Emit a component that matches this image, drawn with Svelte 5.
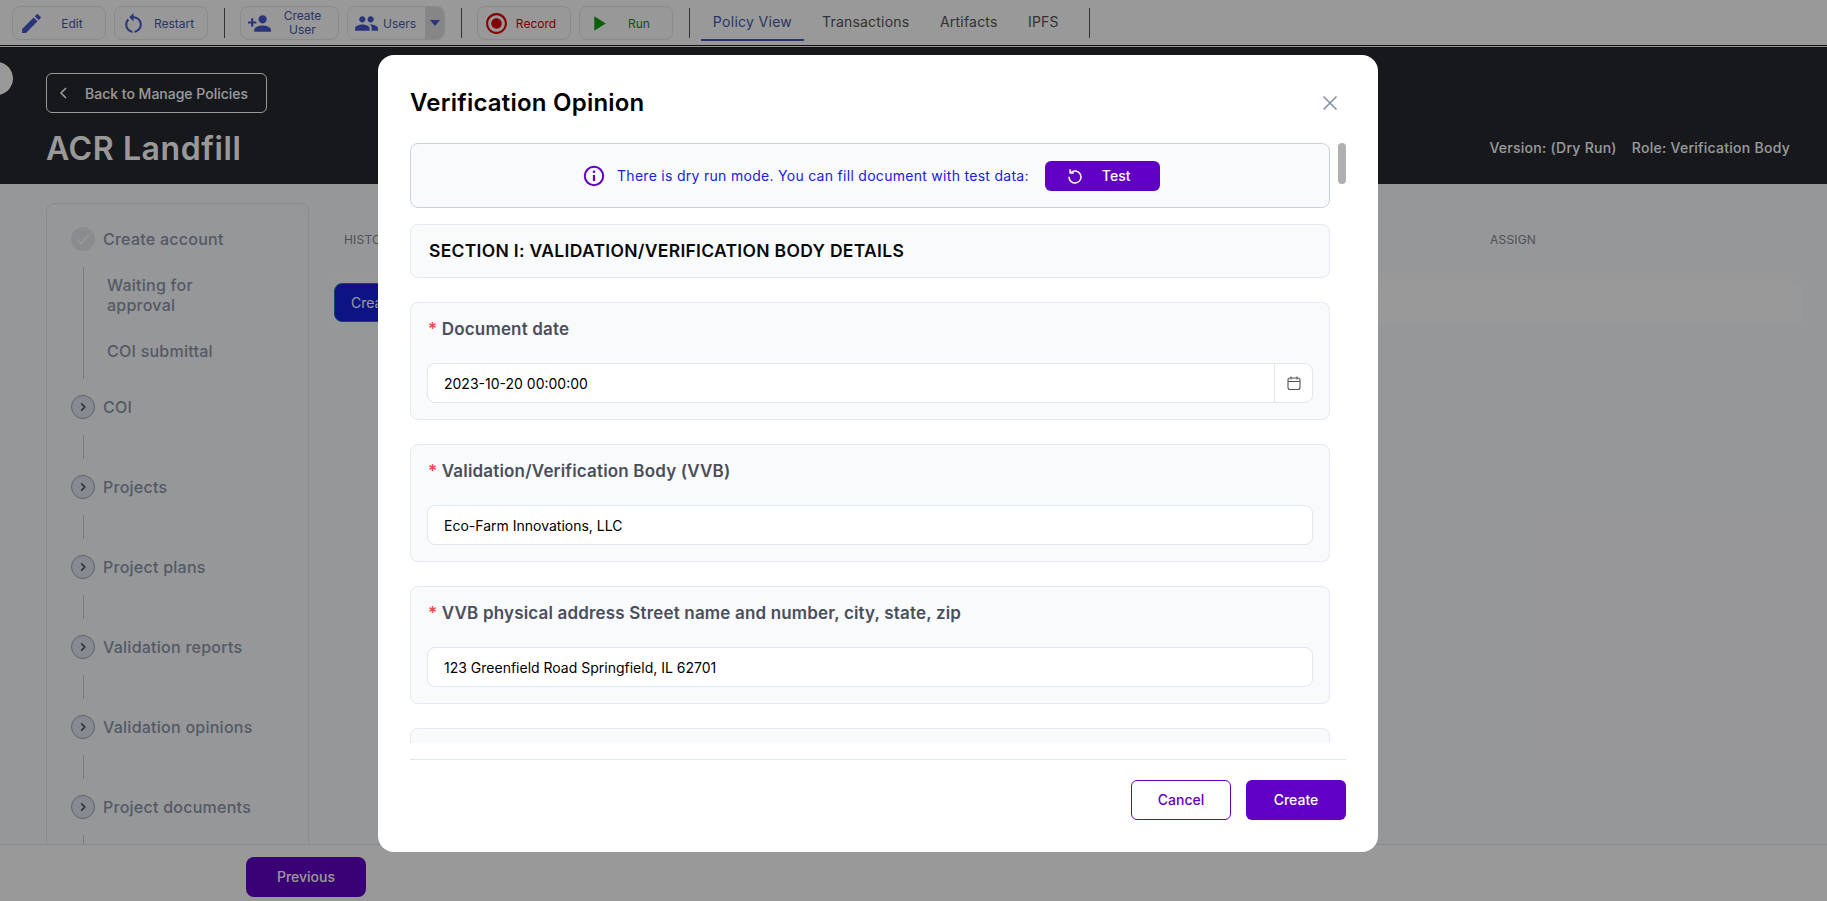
<script>
  const steps = ['COI', 'Projects', 'Project plans', 'Validation reports', 'Validation opinions', 'Project documents'];
  const fields = [
    { label: 'Document date', value: '2023-10-20 00:00:00', date: true },
    { label: 'Validation/Verification Body (VVB)', value: 'Eco-Farm Innovations, LLC' },
    { label: 'VVB physical address Street name and number, city, state, zip', value: '123 Greenfield Road Springfield, IL 62701' }
  ];
</script>

<div class="page">
  <nav class="toolbar">
    <button class="tool"><svg viewBox="0 0 24 24" class="ti blue"><path d="M3 17.25V21h3.75L17.81 9.94l-3.75-3.75L3 17.25zM20.71 7.04c.39-.39.39-1.02 0-1.41l-2.34-2.34c-.39-.39-1.02-.39-1.41 0l-1.83 1.83 3.75 3.75 1.83-1.83z"/></svg><span class="tl blue-t">Edit</span></button>
    <button class="tool"><svg viewBox="0 0 24 24" class="ti blue"><path d="M12 5V2L8 6l4 4V7c3.31 0 6 2.69 6 6 0 2.97-2.17 5.43-5 5.91v2.02c3.95-.49 7-3.85 7-7.93 0-4.42-3.58-8-8-8zm-6 8c0-1.65.67-3.15 1.76-4.24L6.34 7.34C4.9 8.79 4 10.79 4 13c0 4.08 3.05 7.44 7 7.93v-2.02c-2.83-.48-5-2.94-5-5.91z"/></svg><span class="tl blue-t">Restart</span></button>
    <i class="sep"></i>
    <button class="tool wide"><svg viewBox="0 0 24 24" class="ti blue"><path d="M15 12c2.21 0 4-1.79 4-4s-1.79-4-4-4-4 1.79-4 4 1.79 4 4 4zm-9-2V7H4v3H1v2h3v3h2v-3h3v-2H6zm9 4c-2.67 0-8 1.34-8 4v2h16v-2c0-2.66-5.33-4-8-4z"/></svg><span class="tl blue-t two">Create<br />User</span></button>
    <div class="split">
      <button class="tool-main"><svg viewBox="0 0 24 24" class="ti blue"><path d="M16 11c1.66 0 2.99-1.34 2.99-3S17.66 5 16 5c-1.66 0-3 1.34-3 3s1.34 3 3 3zm-8 0c1.66 0 2.99-1.34 2.99-3S9.66 5 8 5C6.34 5 5 6.34 5 8s1.34 3 3 3zm0 2c-2.33 0-7 1.17-7 3.5V19h14v-2.5c0-2.33-4.67-3.5-7-3.5zm8 0c-.29 0-.62.02-.97.05 1.16.84 1.97 1.97 1.97 3.45V19h6v-2.5c0-2.33-4.67-3.5-7-3.5z"/></svg><span class="blue-t users">Users</span></button>
      <button class="drop"><i class="tri"></i></button>
    </div>
    <i class="sep"></i>
    <button class="tool"><svg viewBox="0 0 24 24" class="ti red"><path d="M12 7c-2.76 0-5 2.24-5 5s2.24 5 5 5 5-2.24 5-5-2.24-5-5-5zm0-5C6.48 2 2 6.48 2 12s4.48 10 10 10 10-4.48 10-10S17.52 2 12 2zm0 18c-4.42 0-8-3.58-8-8s3.58-8 8-8 8 3.58 8 8-3.58 8-8 8z"/></svg><span class="tl red-t rec">Record</span></button>
    <button class="tool"><svg viewBox="0 0 24 24" class="ti green"><path d="M8 5v14l11-7z"/></svg><span class="tl green-t">Run</span></button>
    <i class="sep"></i>
    <div class="tabs">
      <span class="tab active">Policy View</span>
      <span class="tab">Transactions</span>
      <span class="tab">Artifacts</span>
      <span class="tab">IPFS</span>
    </div>
    <i class="sep last"></i>
  </nav>

  <header class="head">
    <i class="collapse"></i>
    <div class="head-left">
      <button class="back"><svg viewBox="0 0 16 16" class="chev"><path d="M10 3 5 8l5 5" fill="none" stroke="currentColor" stroke-width="1.6"/></svg>Back to Manage Policies</button>
      <h1>ACR Landfill</h1>
    </div>
    <div class="meta"><span>Version: (Dry Run)</span><span>Role: Verification Body</span></div>
  </header>

  <main class="main">
    <aside class="side">
      <div class="step"><span class="dot done"><svg viewBox="0 0 24 24"><path d="m6 12.5 4 4 8-9" fill="none" stroke="#fff" stroke-width="1.6"/></svg></span><span>Create account</span></div>
      <div class="subs">
        <div>Waiting for<br />approval</div>
        <div>COI submittal</div>
      </div>
      {#each steps as s}
        <div class="step"><span class="dot"><svg viewBox="0 0 24 24"><path d="m10 8 4 4-4 4" fill="none" stroke="#4d5568" stroke-width="1.7"/></svg></span><span>{s}</span></div>
        <i class="vline"></i>
      {/each}
    </aside>
    <section class="content">
      <div class="thead"><span>HISTORY</span><span class="assign">ASSIGN</span></div>
      <div class="strip"></div>
      <div class="trow"><button class="create-old">Create</button></div>
    </section>
  </main>

  <footer class="foot"><button class="prev">Previous</button></footer>

  <div class="overlay">
    <div class="modal">
      <div class="m-head">
        <h2>Verification Opinion</h2>
        <svg viewBox="0 0 16 16" class="close"><path d="M1.5 1.5l13 13M14.5 1.5l-13 13" fill="none" stroke="#848fa9" stroke-width="1.6"/></svg>
      </div>
      <div class="m-body">
        <div class="scroller">
          <div class="alert">
            <svg viewBox="0 0 24 24" class="info"><circle cx="12" cy="12" r="9.2" fill="none" stroke="#6100c4" stroke-width="2"/><path d="M12 11v6" stroke="#6100c4" stroke-width="2.2" fill="none"/><circle cx="12" cy="7.8" r="1.3" fill="#6100c4"/></svg>
            <span>There is dry run mode. You can fill document with test data:</span>
            <button class="test"><svg viewBox="0 0 24 24" class="ri"><path d="M6.5 7.5A8 8 0 1 1 4 13" fill="none" stroke="#fff" stroke-width="2"/><path d="M5.5 3v5h5" fill="none" stroke="#fff" stroke-width="2"/></svg>Test</button>
          </div>
          <div class="section-title">SECTION I: VALIDATION/VERIFICATION BODY DETAILS</div>
          {#each fields as f}
            <div class="field">
              <div class="label"><span class="star">*</span> {f.label}</div>
              <div class="input">
                <span class="val">{f.value}</span>
                {#if f.date}
                  <span class="cal"><svg viewBox="0 0 16 16"><rect x="2" y="3" width="12" height="11.5" rx="2" fill="none" stroke="#555" stroke-width="1.1"/><path d="M2 6.5h12M5 1.5v3M11 1.5v3" stroke="#555" stroke-width="1.1" fill="none"/></svg></span>
                {/if}
              </div>
            </div>
          {/each}
          <div class="field"></div>
        </div>
        <i class="thumb"></i>
      </div>
      <div class="m-foot">
        <button class="btn ghost">Cancel</button>
        <button class="btn solid">Create</button>
      </div>
    </div>
  </div>
</div>

<style>
  :global(body) { margin: 0; font-family: Inter, "Liberation Sans", sans-serif; }
  * { box-sizing: border-box; }
  button { font-family: inherit; cursor: pointer; }
  .page { width: 1827px; height: 901px; display: flex; flex-direction: column; overflow: hidden; background: #fbfcff; position: relative; }

  .toolbar { height: 48px; flex: none; background: #fff; display: flex; align-items: flex-start; padding: 6px 0 0 12px; gap: 8px; border-bottom: 3px double #1a1a1a; }
  .tool { width: 94px; height: 34px; border: 1px solid #e1e7ef; border-radius: 8px; background: #fdfdfd; display: flex; align-items: center; padding: 0 0 0 6px; }
  .tool.wide { width: 99px; }
  .ti { width: 25px; height: 25px; flex: none; }
  .blue { fill: #4558cc; } .red { fill: #dd0000; } .green { fill: #11a011; }
  .tl { flex: 1; text-align: center; font-size: 12px; padding-right: 5px; }
  .tl.rec { padding-right: 7px; }
  .two { line-height: 14px; }
  .blue-t { color: #4a5aa8; } .red-t { color: #d00000; } .green-t { color: #119011; }
  .sep { width: 1px; height: 30px; margin: 2px 7px 0 8px; background: #555; flex: none; }
  .split { width: 98px; height: 34px; display: flex; border: 1px solid #e1e7ef; border-radius: 8px; overflow: hidden; }
  .tool-main { flex: 1; border: 0; background: #fdfdfd; display: flex; align-items: center; gap: 4px; padding: 0 0 0 6px; font-size: 12px; }
  .drop { width: 19px; border: 0; background: #e0e0e0; display: flex; align-items: center; justify-content: center; padding: 0; }
  .tri { width: 0; height: 0; border-left: 5px solid transparent; border-right: 5px solid transparent; border-top: 6px solid #4558cc; }
  .tabs { display: flex; height: 35px; margin-left: -4px; }
  .tab { font-size: 14px; font-weight: 400; color: #555; padding: 7px 0 0; margin-right: 18px; height: 35px; letter-spacing: .2px; }
  .tab.active { color: #4a5aa8; width: 103px; text-align: center; border-bottom: 2px solid #4558b8; letter-spacing: .3px; }
  .tab:nth-child(2) { width: 100px; }
  .tab:nth-child(3) { width: 70px; }
  .tab:nth-child(4) { width: 43px; }
  .sep.last { margin-left: -8px; }

  .head { height: 136px; flex: none; background: #272930; display: flex; justify-content: space-between; padding: 25px 37px 0 46px; position: relative; color: #fff; }
  .collapse { position: absolute; left: -20px; top: 14px; width: 33px; height: 33px; border-radius: 50%; background: #fff; }
  .back { width: 221px; height: 40px; background: transparent; border: 1px solid #fff; border-radius: 6px; color: #fff; font-size: 14px; font-weight: 500; display: flex; align-items: center; gap: 13px; padding: 0 0 0 9px; }
  .chev { width: 16px; height: 16px; }
  h1 { margin: 12px 0 0; font-size: 32px; line-height: 48px; font-weight: 600; letter-spacing: .6px; }
  .meta { display: flex; gap: 15px; font-size: 14px; font-weight: 500; padding-top: 66px; color: #fff; letter-spacing: .27px; }

  .main { flex: 1; min-height: 0; overflow: hidden; display: flex; padding: 19px 25px 0 46px; }
  .side { width: 263px; flex: none; border: 1px solid #e1e7ef; border-radius: 8px; padding: 23px 24px; height: 700px; color: #8d95aa; font-size: 16px; font-weight: 500; letter-spacing: .25px; }
  .step { display: flex; align-items: center; gap: 8px; height: 24px; line-height: 24px; }
  .dot { width: 24px; height: 24px; border-radius: 50%; background: #e1e7ef; border: 1px solid #9aa3b8; flex: none; }
  .dot.done { border: 0; background: #e6e9ef; }
  .dot svg { width: 100%; height: 100%; display: block; }
  .subs { margin: 16px 0 16px 11.5px; border-left: 1px solid #c4cde0; padding: 8px 0 18px 23.5px; height: 112px; line-height: 20px; display: flex; flex-direction: column; gap: 26px; }
  .vline { display: block; width: 1px; height: 24px; margin: 16px 0 16px 11.5px; background: #c4cde0; }
  .content { flex: 1; padding: 29px 0 0 25px; }
  .thead { display: flex; justify-content: space-between; font-size: 12px; line-height: 16px; padding: 0 0 0 10px; color: #828894; font-weight: 400; letter-spacing: .2px; }
  .assign { width: 312px; }
  .strip { height: 9px; margin-top: 26px; background: #fff; margin-right: 8px; opacity: .6; }
  .trow { height: 39px; background: #fff; }
  .create-old { width: 120px; height: 39px; border: 1px solid #1a7ab0; border-radius: 8px; background: #1420dc; color: #fff; font-size: 14px; text-align: left; padding: 0 0 0 16px; }

  .foot { height: 57px; flex: none; background: #fff; border-top: 1px solid #e1e7ef; padding: 12px 0 0 246px; }
  .prev { width: 120px; height: 40px; border: 0; border-radius: 8px; background: #6100c4; color: #fff; font-size: 14px; font-weight: 500; padding: 0 0 1px; }

  .overlay { position: absolute; inset: 0; background: rgba(0, 0, 0, .4); padding: 55px 0 0 378px; }
  .modal { width: 1000px; height: 797px; background: #fff; border-radius: 16px; padding: 0 32px 32px; display: flex; flex-direction: column; }
  .m-head { height: 88px; flex: none; display: flex; justify-content: space-between; align-items: flex-start; padding-top: 32px; }
  h2 { margin: 0; font-size: 24px; line-height: 32px; font-weight: 600; color: #000; letter-spacing: .22px; }
  .close { width: 16px; height: 16px; margin: 8px 8px 0 0; }
  .m-body { height: 600px; flex: none; position: relative; overflow: hidden; }
  .scroller { width: 920px; }
  .thumb { position: absolute; right: 0; top: 0; width: 8px; height: 41px; border-radius: 4px; background: #b0b0b0; }
  .alert { height: 65px; border: 1px solid #c8d0e4; border-radius: 8px; background: #f9fafc; display: flex; align-items: center; padding-left: 171px; color: #2020e0; font-size: 14px; letter-spacing: .29px; margin-bottom: 16px; }
  .info { width: 24px; height: 24px; margin-right: 11px; }
  .test { width: 115px; height: 30px; border: 0; border-radius: 6px; background: #6100c4; color: #fff; font-size: 14px; font-weight: 500; margin-left: 16px; display: flex; align-items: center; gap: 18px; padding: 0 0 0 21px; }
  .ri { width: 18px; height: 18px; }
  .section-title { height: 54px; border: 1px solid #e5eaf2; border-radius: 8px; background: #f9fafc; display: flex; align-items: center; padding: 0 0 2px 18px; font-size: 17.5px; font-weight: 600; color: #0a0a0a; letter-spacing: .3px; margin-bottom: 24px; }
  .field { height: 118px; border: 1px solid #e5eaf2; border-radius: 8px; background: #f9fafc; padding: 14px 16px 0 16px; margin-bottom: 24px; }
  .label { font-size: 17px; font-weight: 600; line-height: 24px; color: #4a4f5b; padding-left: 1px; height: 46px; letter-spacing: .17px; }
  .star { color: #f0484e; }
  .input { height: 40px; border: 1px solid #e1e7ef; border-radius: 8px; background: #fff; display: flex; align-items: center; padding-left: 16px; font-size: 14px; color: #000; justify-content: space-between; }
  .cal { width: 38px; height: 38px; border-left: 1px solid #e1e7ef; display: flex; align-items: center; justify-content: center; }
  .cal svg { width: 16px; height: 16px; }
  .m-foot { margin-top: 16px; border-top: 1px solid #e1e7ef; padding-top: 20px; display: flex; justify-content: flex-end; gap: 15px; }
  .btn { width: 100px; height: 40px; border-radius: 6px; font-size: 14px; font-weight: 500; padding: 0 0 1px; }
  .ghost { background: #fff; border: 1px solid #6100c4; color: #6100c4; }
  .solid { background: #6100c4; border: 0; color: #fff; }
</style>
